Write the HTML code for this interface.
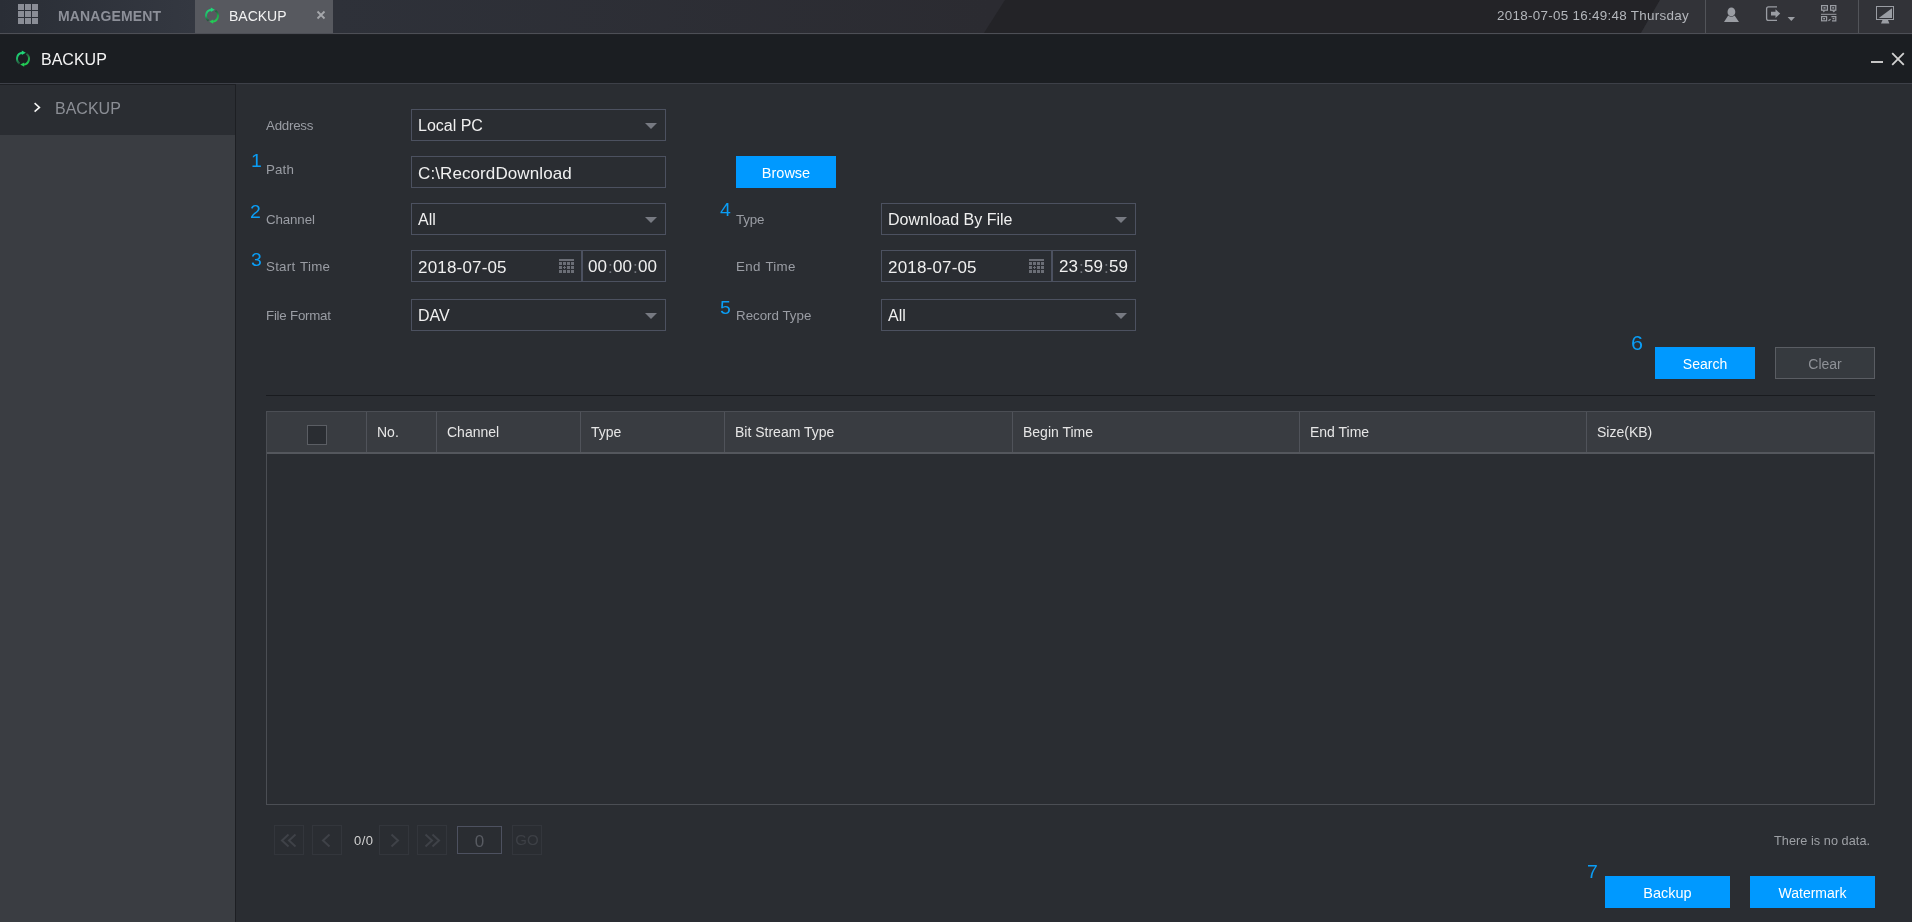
<!DOCTYPE html>
<html>
<head>
<meta charset="utf-8">
<title>BACKUP</title>
<style>
*{box-sizing:border-box;margin:0;padding:0}
html,body{width:1912px;height:922px;overflow:hidden;background:#2a2d32;font-family:"Liberation Sans",sans-serif}
body{position:relative}
.a{position:absolute}
.t{position:absolute;white-space:nowrap;line-height:1;will-change:transform}
/* top bar */
#top{left:0;top:0;width:1912px;height:33px;background:linear-gradient(90deg,#2e3139 333px,#2b2b31 990px)}
#topline{left:0;top:33px;width:1912px;height:1px;background:#4d4f56}
#topline2{left:0;top:34px;width:1912px;height:1px;background:#1f2125}
#tab1{left:0;top:0;width:195px;height:33px;background:linear-gradient(90deg,#2a2e36,#343841)}
#tab2{left:195px;top:0;width:138px;height:33px;background:#57595f}
#titlebar{left:0;top:35px;width:1912px;height:48px;background:#1b1e22}
#titleline{left:0;top:83px;width:1912px;height:1px;background:#3d4048}
#side{left:0;top:84px;width:235px;height:838px;background:#3a3d42;border-top:1px solid #1d1f23}
#sideitem{left:0;top:85px;width:235px;height:50px;background:#2a2d32}
#sideline{left:235px;top:84px;width:1px;height:838px;background:#1d1f23}
.lbl{color:#9a9da4;font-size:13.33px}
.num{color:#0a9df5;font-size:18px;transform:scaleX(1.08);transform-origin:0 0}
.box{position:absolute;height:32px;border:1px solid #4c5160}
.val{color:#f0f0f0;font-size:16px}
.arrow{position:absolute;width:0;height:0;border-left:6px solid transparent;border-right:6px solid transparent;border-top:6px solid #777a82}
.btn span{display:block;will-change:transform}
.btn{position:absolute;height:32px;background:#0099ff;color:#fff;font-size:14px;text-align:center;line-height:34px}
.th{color:#e6e6e6;font-size:14px}
.vd{position:absolute;top:412px;width:1px;height:40px;background:#50535a}
.pg{position:absolute;top:825px;width:30px;height:30px;border:1px solid #33363c}
</style>
</head>
<body>
<div class="a" id="top"></div>
<svg class="a" style="left:0;top:0" width="1912" height="33" viewBox="0 0 1912 33">
<polygon points="1005,0 1660,0 1641,33 984,33" fill="#232327"/>
<polygon points="1660,0 1912,0 1912,33 1641,33" fill="#323338"/>
</svg>
<div class="a" id="tab1"></div>
<div class="a" id="tab2"></div>
<div class="a" id="topline"></div>
<div class="a" id="topline2"></div>
<div class="a" id="titlebar"></div>
<div class="a" id="titleline"></div>
<div class="a" id="side"></div>
<div class="a" id="sideitem"></div>
<div class="a" id="sideline"></div>
<!-- grid icon -->
<svg class="a" style="left:18px;top:4px" width="20" height="20" viewBox="0 0 20 20" fill="#8a8d96">
<rect x="0" y="0" width="6" height="6"/><rect x="7" y="0" width="6" height="6"/><rect x="14" y="0" width="6" height="6"/>
<rect x="0" y="7" width="6" height="6"/><rect x="7" y="7" width="6" height="6"/><rect x="14" y="7" width="6" height="6"/>
<rect x="0" y="14" width="6" height="6"/><rect x="7" y="14" width="6" height="6"/><rect x="14" y="14" width="6" height="6"/>
</svg>
<div class="t" style="left:58px;top:9px;font-size:14px;font-weight:bold;letter-spacing:0.13px;color:#8d9099">MANAGEMENT</div>
<!-- refresh icon tab -->
<svg class="a" style="left:204px;top:7px" width="16" height="17" viewBox="0 0 16 17">
<defs>
<linearGradient id="g1" x1="0" y1="0" x2="0" y2="1"><stop offset="0" stop-color="#1fd678"/><stop offset="0.55" stop-color="#1fb565"/><stop offset="1" stop-color="#25553c"/></linearGradient>
<linearGradient id="g2" x1="0" y1="1" x2="0" y2="0"><stop offset="0" stop-color="#22cc55"/><stop offset="0.55" stop-color="#22a84c"/><stop offset="1" stop-color="#2a5a40"/></linearGradient>
</defs>
<path d="M4.56 13.61 A6 6 0 0 1 6.96 2.79" fill="none" stroke="url(#g1)" stroke-width="2"/>
<polygon points="6.8,0.6 10.8,2.8 6.8,5" fill="#1fd678"/>
<path d="M11.44 3.79 A6 6 0 0 1 9.04 14.61" fill="none" stroke="url(#g2)" stroke-width="2"/>
<polygon points="9.2,12.4 5.2,14.6 9.2,16.8" fill="#22cc55"/>
</svg>
<div class="t" style="left:229px;top:9px;font-size:14px;color:#f2f2f2">BACKUP</div>
<svg class="a" style="left:316px;top:10px" width="10" height="10" viewBox="0 0 10 10"><path d="M1.5 1.5 L8.5 8.5 M8.5 1.5 L1.5 8.5" stroke="#a5a7ab" stroke-width="1.8" fill="none"/></svg>
<div class="t" style="left:1497px;top:9px;font-size:13.4px;letter-spacing:0.3px;color:#b4b7bc">2018-07-05 16:49:48 Thursday</div>
<div class="a" style="left:1705px;top:0;width:1px;height:33px;background:#525459"></div>
<div class="a" style="left:1858px;top:0;width:1px;height:33px;background:#525459"></div>
<!-- user -->
<svg class="a" style="left:1723px;top:7px" width="17" height="16" viewBox="0 0 17 16" fill="#9a9da3">
<ellipse cx="8.4" cy="4.9" rx="3.9" ry="4.4"/>
<path d="M5.2 8.5 L1 15 L16 15 L11.6 8.5 Q8.4 11 5.2 8.5 Z"/>
</svg>
<!-- logout -->
<svg class="a" style="left:1765px;top:5px" width="32" height="18" viewBox="0 0 32 18">
<path d="M12 1.8 L3.5 1.8 Q1.6 1.8 1.6 3.7 L1.6 13.5 Q1.6 15.4 3.5 15.4 L12 15.4" fill="none" stroke="#9a9da3" stroke-width="1.3"/>
<path d="M6 6.8 L10.5 6.8 L10.5 4.2 L15.2 8.6 L10.5 13 L10.5 10.4 L6 10.4 Z" fill="#9a9da3"/>
<polygon points="22.6,12 30,12 26.3,16" fill="#9a9da3"/>
</svg>
<!-- qr -->
<svg class="a" style="left:1821px;top:5px" width="16" height="17" viewBox="0 0 16 17" fill="none" stroke="#9a9da3" stroke-width="1.2">
<rect x="0.6" y="0.6" width="5.8" height="4.6"/><rect x="9.6" y="0.6" width="5.2" height="4.6"/>
<rect x="2.4" y="2.2" width="2.2" height="1.4" fill="#9a9da3" stroke="none"/><rect x="11.2" y="2.2" width="2" height="1.4" fill="#9a9da3" stroke="none"/>
<polygon points="1.5,5.4 4.2,5.4 2.8,7.4" fill="#9a9da3" stroke="none"/><polygon points="11,5.4 14.6,5.4 12.8,7.6" fill="#9a9da3" stroke="none"/>
<path d="M0 9.3 L15.4 9.3" stroke-width="1"/>
<rect x="0.6" y="11.6" width="5" height="4.2"/><rect x="2.2" y="13" width="1.8" height="1.4" fill="#9a9da3" stroke="none"/>
<path d="M10.4 11.6 L14.8 11.6 L14.8 15.8 L11 15.8 M7.4 15.8 L9.6 14.2 M11.6 13.6 L13.4 13.6"/>
</svg>
<!-- monitor -->
<svg class="a" style="left:1876px;top:6px" width="19" height="18" viewBox="0 0 19 18">
<rect x="0.5" y="0.5" width="17" height="13" fill="none" stroke="#9a9da3" stroke-width="1"/>
<polygon points="16,2.3 16,12 2.8,12" fill="#9a9da3"/>
<polygon points="6.5,14 12,14 13.4,17.6 5,17.6" fill="#9a9da3"/>
</svg>
<!-- title bar -->
<svg class="a" style="left:15px;top:50px" width="16" height="17" viewBox="0 0 16 17">
<path d="M4.56 13.61 A6 6 0 0 1 6.96 2.79" fill="none" stroke="url(#g1)" stroke-width="2"/>
<polygon points="6.8,0.6 10.8,2.8 6.8,5" fill="#1fd678"/>
<path d="M11.44 3.79 A6 6 0 0 1 9.04 14.61" fill="none" stroke="url(#g2)" stroke-width="2"/>
<polygon points="9.2,12.4 5.2,14.6 9.2,16.8" fill="#22cc55"/>
</svg>
<div class="t" style="left:41px;top:52px;font-size:16px;color:#f4f4f4">BACKUP</div>
<div class="a" style="left:1871px;top:61px;width:12px;height:2px;background:#c6c6c6"></div>
<svg class="a" style="left:1891px;top:52px" width="14" height="14" viewBox="0 0 14 14"><path d="M1.2 1.2 L12.8 12.8 M12.8 1.2 L1.2 12.8" stroke="#d2d2d2" stroke-width="1.8" fill="none"/></svg>
<!-- sidebar -->
<svg class="a" style="left:32px;top:101px" width="10" height="12" viewBox="0 0 10 12"><path d="M2.6 2.2 L7.4 6.4 L2.6 10.6" stroke="#f4f4f4" stroke-width="1.6" fill="none"/></svg>
<div class="t" style="left:55px;top:101px;font-size:16px;color:#8b8e95">BACKUP</div>
<!-- form labels -->
<div class="t lbl" style="left:266px;top:119px;letter-spacing:-0.25px">Address</div>
<div class="t lbl" style="left:266px;top:163px;letter-spacing:0.15px">Path</div>
<div class="t lbl" style="left:266px;top:213px;letter-spacing:-0.13px">Channel</div>
<div class="t lbl" style="left:266px;top:260px;word-spacing:1px;letter-spacing:0.25px">Start Time</div>
<div class="t lbl" style="left:266px;top:309px;letter-spacing:-0.24px">File Format</div>
<div class="t lbl" style="left:736px;top:213px;letter-spacing:-0.17px">Type</div>
<div class="t lbl" style="left:736px;top:260px;word-spacing:1px;letter-spacing:0.3px">End Time</div>
<div class="t lbl" style="left:736px;top:309px">Record Type</div>
<div class="t num" style="left:250.5px;top:152px">1</div>
<div class="t num" style="left:250.3px;top:203px">2</div>
<div class="t num" style="left:250.7px;top:251px">3</div>
<div class="t num" style="left:719.6px;top:201px">4</div>
<div class="t num" style="left:720px;top:299px">5</div>
<div class="t num" style="left:1631.2px;top:333px;font-size:20px">6</div>
<div class="t num" style="left:1586.7px;top:863px">7</div>
<!-- boxes -->
<div class="box" style="left:411px;top:109px;width:255px"></div>
<div class="t val" style="left:418px;top:118px">Local PC</div>
<div class="arrow" style="left:645px;top:123px"></div>
<div class="box" style="left:411px;top:156px;width:255px"></div>
<div class="t val" style="left:418px;top:165px;font-size:17px;letter-spacing:0.1px">C:\RecordDownload</div>
<div class="btn" style="left:736px;top:156px;width:100px;font-size:14.5px"><span>Browse</span></div>
<div class="box" style="left:411px;top:203px;width:255px"></div>
<div class="t val" style="left:418px;top:212px">All</div>
<div class="arrow" style="left:645px;top:217px"></div>
<div class="box" style="left:881px;top:203px;width:255px"></div>
<div class="t val" style="left:888px;top:212px">Download By File</div>
<div class="arrow" style="left:1115px;top:217px"></div>
<div class="box" style="left:411px;top:250px;width:171px"></div>
<div class="box" style="left:582px;top:250px;width:84px"></div>
<div class="t val" style="left:418px;top:259px;font-size:17px;letter-spacing:0.18px">2018-07-05</div>
<div class="t val" style="left:588px;top:258px;font-size:17px">00</div><div class="t val" style="left:608px;top:259px;font-size:17px;color:#73767d">:</div>
<div class="t val" style="left:613px;top:258px;font-size:17px">00</div><div class="t val" style="left:633px;top:259px;font-size:17px;color:#73767d">:</div>
<div class="t val" style="left:638px;top:258px;font-size:17px">00</div>
<div class="box" style="left:881px;top:250px;width:171px"></div>
<div class="box" style="left:1052px;top:250px;width:84px"></div>
<div class="t val" style="left:888px;top:259px;font-size:17px;letter-spacing:0.18px">2018-07-05</div>
<div class="t val" style="left:1059px;top:258px;font-size:17px">23</div><div class="t val" style="left:1079px;top:259px;font-size:17px;color:#73767d">:</div>
<div class="t val" style="left:1084px;top:258px;font-size:17px">59</div><div class="t val" style="left:1104px;top:259px;font-size:17px;color:#73767d">:</div>
<div class="t val" style="left:1109px;top:258px;font-size:17px">59</div>
<!-- calendar icons -->
<svg class="a" style="left:559px;top:259px" width="16" height="15" viewBox="0 0 16 15" fill="#6b6e76">
<rect x="0" y="0" width="15" height="2"/>
<rect x="0" y="3" width="3" height="3"/><rect x="4" y="3" width="3" height="3"/><rect x="8" y="3" width="3" height="3"/><rect x="12" y="3" width="3" height="3"/>
<rect x="0" y="7" width="3" height="3"/><path d="M5 7h1v1h1v1h-1v1h-1v-1h-1v-1h1z"/><rect x="8" y="7" width="3" height="3"/><rect x="12" y="7" width="3" height="3"/>
<rect x="0" y="11" width="3" height="3"/><rect x="4" y="11" width="3" height="3"/><rect x="8" y="11" width="3" height="3"/><rect x="12" y="11" width="3" height="3"/>
</svg>
<svg class="a" style="left:1029px;top:259px" width="16" height="15" viewBox="0 0 16 15" fill="#6b6e76">
<rect x="0" y="0" width="15" height="2"/>
<rect x="0" y="3" width="3" height="3"/><rect x="4" y="3" width="3" height="3"/><rect x="8" y="3" width="3" height="3"/><rect x="12" y="3" width="3" height="3"/>
<rect x="0" y="7" width="3" height="3"/><path d="M5 7h1v1h1v1h-1v1h-1v-1h-1v-1h1z"/><rect x="8" y="7" width="3" height="3"/><rect x="12" y="7" width="3" height="3"/>
<rect x="0" y="11" width="3" height="3"/><rect x="4" y="11" width="3" height="3"/><rect x="8" y="11" width="3" height="3"/><rect x="12" y="11" width="3" height="3"/>
</svg>
<div class="box" style="left:411px;top:299px;width:255px"></div>
<div class="t val" style="left:418px;top:308px">DAV</div>
<div class="arrow" style="left:645px;top:313px"></div>
<div class="box" style="left:881px;top:299px;width:255px"></div>
<div class="t val" style="left:888px;top:308px">All</div>
<div class="arrow" style="left:1115px;top:313px"></div>
<div class="btn" style="left:1655px;top:347px;width:100px"><span>Search</span></div>
<div class="btn" style="left:1775px;top:347px;width:100px;background:#363a3f;border:1px solid #5a5d63;color:#8e9197;line-height:32px"><span>Clear</span></div>
<div class="a" style="left:266px;top:395px;width:1609px;height:1px;background:#191b1f"></div>
<!-- table -->
<div class="a" style="left:266px;top:411px;width:1609px;height:394px;border:1px solid #4b4e54"></div>
<div class="a" style="left:267px;top:412px;width:1607px;height:40px;background:#393c41"></div>
<div class="a" style="left:267px;top:452px;width:1607px;height:2px;background:#54575d"></div>
<div class="vd" style="left:366px"></div><div class="vd" style="left:436px"></div><div class="vd" style="left:580px"></div><div class="vd" style="left:724px"></div>
<div class="vd" style="left:1012px"></div><div class="vd" style="left:1299px"></div><div class="vd" style="left:1586px"></div>
<div class="a" style="left:307px;top:425px;width:20px;height:20px;border:1px solid #5b5e64;background:#2a2d32"></div>
<div class="t th" style="left:377px;top:425px">No.</div>
<div class="t th" style="left:447px;top:425px">Channel</div>
<div class="t th" style="left:591px;top:425px">Type</div>
<div class="t th" style="left:735px;top:425px">Bit Stream Type</div>
<div class="t th" style="left:1023px;top:425px">Begin Time</div>
<div class="t th" style="left:1310px;top:425px">End Time</div>
<div class="t th" style="left:1597px;top:425px">Size(KB)</div>
<!-- pager -->
<div class="pg" style="left:274px"></div><div class="pg" style="left:312px"></div><div class="pg" style="left:379px"></div><div class="pg" style="left:417px"></div><div class="pg" style="left:512px"></div>
<svg class="a" style="left:274px;top:825px" width="30" height="30" viewBox="0 0 30 30" fill="none" stroke="#3f4248" stroke-width="2"><path d="M14.5 9.5 L8 15.5 L14.5 21.5 M21.5 9.5 L15 15.5 L21.5 21.5"/></svg>
<svg class="a" style="left:312px;top:825px" width="30" height="30" viewBox="0 0 30 30" fill="none" stroke="#3f4248" stroke-width="2"><path d="M17.5 9.5 L11 15.5 L17.5 21.5"/></svg>
<div class="t" style="left:354px;top:834px;font-size:13px;letter-spacing:0.4px;color:#d2d2d2">0/0</div>
<svg class="a" style="left:379px;top:825px" width="30" height="30" viewBox="0 0 30 30" fill="none" stroke="#3f4248" stroke-width="2"><path d="M12.5 9.5 L19 15.5 L12.5 21.5"/></svg>
<svg class="a" style="left:417px;top:825px" width="30" height="30" viewBox="0 0 30 30" fill="none" stroke="#3f4248" stroke-width="2"><path d="M8.5 9.5 L15 15.5 L8.5 21.5 M15.5 9.5 L22 15.5 L15.5 21.5"/></svg>
<div class="a" style="left:457px;top:826px;width:45px;height:28px;border:1px solid #4d5160"></div>
<div class="t" style="left:457px;top:833px;width:45px;text-align:center;font-size:17px;color:#585b62">0</div>
<div class="t" style="left:512px;top:832px;width:30px;text-align:center;font-size:15px;color:#3d4046">GO</div>
<div class="t" style="left:1774px;top:835px;font-size:12.7px;letter-spacing:0.05px;color:#9da0a5">There is no data.</div>
<div class="btn" style="left:1605px;top:876px;width:125px;font-size:14.5px"><span>Backup</span></div>
<div class="btn" style="left:1750px;top:876px;width:125px"><span>Watermark</span></div>
</body>
</html>
